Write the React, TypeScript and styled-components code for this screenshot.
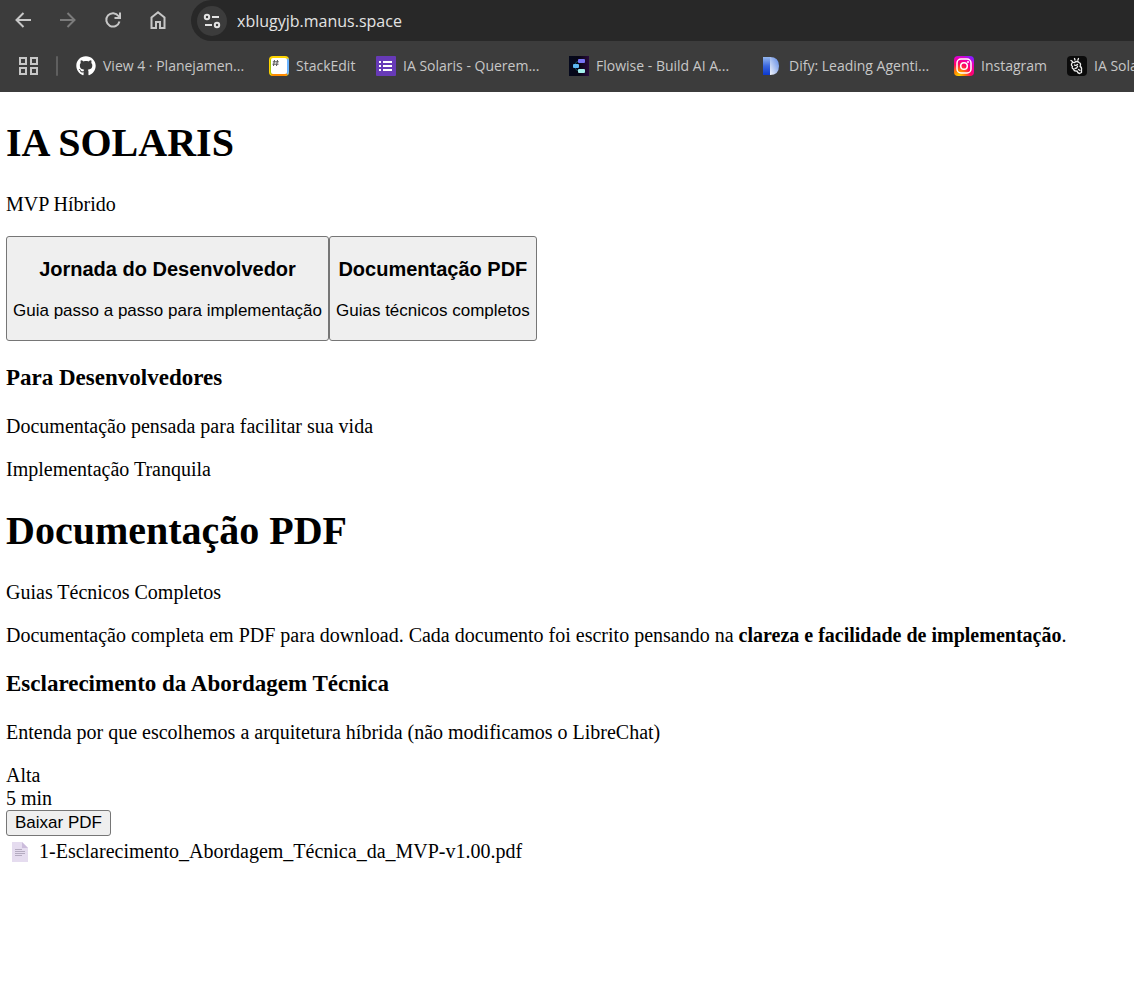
import React from "react";
import styled, { createGlobalStyle } from "styled-components";
import { FaGithub } from "react-icons/fa";

const GlobalStyle = createGlobalStyle`
  body {
    margin: 0;
    background: #fff;
    color: #000;
    font-family: "Liberation Serif", "Times New Roman", serif;
    font-size: 20px;
    line-height: 23px;
  }
`;

const Browser = styled.header`
  background: #3c3c3c;
  font-family: "Open Sans", "Segoe UI", sans-serif;
  overflow: hidden;
`;

const Toolbar = styled.nav`
  display: flex;
  height: 41px;
  padding-left: 11px;
`;

const NavButton = styled.button`
  display: flex;
  align-items: center;
  justify-content: center;
  width: 24px;
  height: 40px;
  margin-right: 21px;
  padding: 0;
  border: 0;
  background: none;
  color: #c7c7c7;

  &:disabled {
    color: #7b7b7b;
  }
`;

const AddressBar = styled.div`
  display: flex;
  flex: 1;
  align-items: center;
  height: 41px;
  padding-left: 6px;
  border-radius: 21px 0 0 21px;
  background: #282828;
`;

const SiteInfo = styled.button`
  display: flex;
  align-items: center;
  justify-content: center;
  width: 30px;
  height: 30px;
  padding: 0;
  border: 0;
  border-radius: 50%;
  background: #3c3c3c;
  color: #e3e3e3;
`;

const Address = styled.input`
  flex: 1;
  min-width: 0;
  margin-left: 10px;
  padding: 0;
  border: 0;
  outline: 0;
  background: none;
  color: #e3e3e3;
  font: 16px "Open Sans", "Segoe UI", sans-serif;
`;

const Bookmarks = styled.nav`
  display: flex;
  align-items: center;
  gap: 20px;
  height: 49px;
  padding: 0 0 2px 16px;
`;

const AppsGroup = styled.div`
  display: flex;
  align-items: center;
  gap: 16px;
  flex: none;
  width: 40px;
`;

const AppsButton = styled.button`
  display: flex;
  padding: 0;
  border: 0;
  background: none;
  color: #c7c7c7;
`;

const Separator = styled.span`
  flex: none;
  width: 2px;
  height: 20px;
  border-radius: 1px;
  background: #5f5f5f;
`;

const Bookmark = styled.a<{ $label: number }>`
  display: grid;
  grid-template-columns: 20px ${(p) => p.$label}px;
  gap: 7px;
  flex: none;
  align-items: center;
  color: #c7c7c7;
  font-size: 14px;
  line-height: 20px;
  text-decoration: none;
  white-space: nowrap;

  svg {
    display: block;
  }
`;

const Page = styled.main`
  padding: 28px 6px 24px;
`;

const Title = styled.h1`
  margin: 0 0 27px;
  font-size: 40px;
  line-height: 46px;
`;

const Text = styled.p`
  margin: 0 0 20px;
`;

const LeadText = styled(Text)`
  margin-bottom: 27px;
`;

const Subtitle = styled.h3`
  margin: 23px 0 24px;
  font-size: 23px;
  line-height: 27px;
`;

const Tabs = styled.nav`
  display: flex;
  margin-top: 20px;
`;

const Button = styled.button`
  padding: 2px 8px;
  border: 1px solid #767676;
  border-radius: 3px;
  background: #efefef;
  color: #000;
  font: 17px/20px "Liberation Sans", Arial, sans-serif;
`;

const TabButton = styled(Button)`
  padding: 2px 6px;

  h3 {
    margin: 19px 0 20px;
    font-size: 20px;
    line-height: 23px;
  }

  p {
    margin: 17px 0;
    line-height: 20px;
  }
`;

const FileRow = styled.div`
  display: flex;
  align-items: center;
  gap: 10px;
  margin-top: 4px;
  padding-left: 5px;
`;

const BackIcon = () => (
  <svg width="18" height="18" viewBox="0 0 18 18" fill="none" stroke="currentColor" strokeWidth="2">
    <path d="M17 9H3M9.5 2 2.5 9l7 7" />
  </svg>
);

const ForwardIcon = () => (
  <svg width="18" height="18" viewBox="0 0 18 18" fill="none" stroke="currentColor" strokeWidth="2">
    <path d="M1 9h14M8.500 2l7 7-7 7" />
  </svg>
);

const ReloadIcon = () => (
  <svg width="18" height="18" viewBox="0 0 18 18" fill="none" stroke="currentColor" strokeWidth="2">
    <path d="M15.500 10.500A6.700 6.700 0 1 1 14.500 5L16 6.500M16 1.500V7h-5.500" />
  </svg>
);

const HomeIcon = () => (
  <svg width="18" height="20" viewBox="0 0 18 20" fill="none" stroke="currentColor" strokeWidth="2">
    <path d="M2.500 7.500 9 2.200l6.500 5.300V18H11v-6H7v6H2.500Z" />
  </svg>
);

const TuneIcon = () => (
  <svg width="18" height="16" viewBox="0 0 18 16" fill="none" stroke="currentColor" strokeWidth="2">
    <circle cx="4" cy="4" r="2.200" />
    <path d="M9 4h7M2 12h7" />
    <circle cx="14" cy="12" r="2.200" />
  </svg>
);

const AppsIcon = () => (
  <svg width="24" height="20" viewBox="0 0 24 20" fill="none" stroke="currentColor" strokeWidth="2">
    <path d="M4 2h6v6H4zM15 2h6v6h-6zM4 12h6v6H4zM15 12h6v6h-6z" />
  </svg>
);

const StackEditIcon = () => (
  <svg width="20" height="20" viewBox="0 0 20 20">
    <rect width="20" height="20" rx="4" fill="#ffd500" />
    <path d="M1 3v13q0 2 2 3L10 10Z" fill="#a6c40a" />
    <path d="M2 19q1 1 3 1h10q3 0 4-2L10 10Z" fill="#ff8a00" />
    <path d="M19 2q1 1 1 3v10q0 2-1 4L10 10Z" fill="#6bb4ff" />
    <rect x="2" y="2" width="16" height="16" rx="2" fill="#fff" />
    <path d="M5.500 4 4.500 10M8.500 4l-1 6M3.800 5.800h6M3.500 8.200h6" stroke="#555" fill="none" />
  </svg>
);

const FormsIcon = () => (
  <svg width="20" height="20" viewBox="0 0 20 20">
    <rect width="20" height="20" rx="1" fill="#673ab7" />
    <path d="M3 5h2v2H3zM7 5h9v2H7zM3 9h2v2H3zM7 9h9v2H7zM3 13h2v2H3zM7 13h9v2H7z" fill="#fff" />
  </svg>
);

const FlowiseIcon = () => (
  <svg width="20" height="20" viewBox="0 0 20 20">
    <defs>
      <linearGradient id="flowise">
        <stop stopColor="#04081c" />
        <stop offset=".5" stopColor="#080716" />
        <stop offset="1" stopColor="#290a3c" />
      </linearGradient>
    </defs>
    <rect width="20" height="20" fill="url(#flowise)" />
    <path d="M6 10q0-5 5-5M6 10q0 5 5 5" stroke="#155567" fill="none" />
    <rect x="9" y="3" width="7" height="4" rx="1" fill="#7775f5" />
    <rect x="4" y="8" width="6" height="4" rx="1" fill="#5db7f0" />
    <rect x="9" y="13" width="7" height="4" rx="1" fill="#a5f0ed" />
  </svg>
);

const DifyIcon = () => (
  <svg width="20" height="20" viewBox="0 0 20 20">
    <defs>
      <linearGradient id="difyLeft" x2="0" y2="1">
        <stop stopColor="#94b7ee" />
        <stop offset=".5" stopColor="#3b68df" />
        <stop offset="1" stopColor="#0b38ce" />
      </linearGradient>
      <linearGradient id="difyRight" x1="1" y1="0" x2="0" y2="1">
        <stop stopColor="#5885e5" />
        <stop offset="1" stopColor="#f4f6fb" />
      </linearGradient>
    </defs>
    <path d="M1 1h8v18H1Z" fill="url(#difyLeft)" />
    <path d="M8 1q9 0 9 9t-9 9Z" fill="url(#difyRight)" />
  </svg>
);

const InstagramIcon = () => (
  <svg width="20" height="20" viewBox="0 0 20 20">
    <defs>
      <radialGradient id="insta" cx=".25" cy="1" r="1.100">
        <stop stopColor="#ffd600" />
        <stop offset=".25" stopColor="#ff8500" />
        <stop offset=".55" stopColor="#ff0164" />
        <stop offset=".85" stopColor="#e400c4" />
        <stop offset="1" stopColor="#8a1aff" />
      </radialGradient>
    </defs>
    <rect width="20" height="20" rx="4" fill="url(#insta)" />
    <g fill="none" stroke="#fff" strokeWidth="1.500">
      <rect x="3" y="3" width="14" height="14" rx="4" />
      <circle cx="10" cy="10" r="3.300" />
    </g>
    <circle cx="14" cy="6" r="1" fill="#fff" />
  </svg>
);

const ManusIcon = () => (
  <svg width="20" height="20" viewBox="0 0 20 20">
    <rect width="20" height="20" rx="4" fill="#0b0b0b" />
    <g fill="none" stroke="#eee" strokeWidth="1.300" strokeLinecap="round" strokeLinejoin="round">
      <path d="M7.500 2.500 8 4M11.500 2.500 10.800 4.200M4 4.500l1.500 1" />
      <path d="M4.500 8Q5 6 7.500 6.500 10 4.500 12 6.500q2.500 1 1 4 2 .5 1.500 3.500v2.500l-2 1q-2-.5-2.500-2.500-3 .5-3.500-2-2-.5-1-2.500Q4 9.500 4.500 8Z" />
      <path d="M7.500 9q1.500 1 3-.5m-2.500 4q2 0 2.500-2m1 3 1.500 1" />
    </g>
  </svg>
);

const DocumentIcon = () => (
  <svg width="18" height="20" viewBox="0 0 18 20" aria-hidden="true">
    <path d="M1 0h10l6 6v14H1Z" fill="#e5dcef" />
    <path d="M11 0v6h6Z" fill="#cbbcdb" />
    <path d="M4 7.500h7M4 9.500h10M4 11.500h10M4 13.500h7" stroke="#b4abc0" />
  </svg>
);

const bookmarks = [
  { label: "View 4 · Planejamen...", width: 146, icon: <FaGithub size={20} color="#fff" /> },
  { label: "StackEdit", width: 60, icon: <StackEditIcon /> },
  { label: "IA Solaris - Querem...", width: 146, icon: <FormsIcon /> },
  { label: "Flowise - Build AI A...", width: 146, icon: <FlowiseIcon /> },
  { label: "Dify: Leading Agenti...", width: 145, icon: <DifyIcon /> },
  { label: "Instagram", width: 66, icon: <InstagramIcon /> },
  { label: "IA Sola", width: 60, icon: <ManusIcon /> },
];

export default function App() {
  return (
    <>
      <GlobalStyle />
      <Browser>
        <Toolbar aria-label="Navegação">
          <NavButton aria-label="Voltar"><BackIcon /></NavButton>
          <NavButton aria-label="Avançar" disabled><ForwardIcon /></NavButton>
          <NavButton aria-label="Recarregar"><ReloadIcon /></NavButton>
          <NavButton aria-label="Página inicial"><HomeIcon /></NavButton>
          <AddressBar>
            <SiteInfo aria-label="Informações do site"><TuneIcon /></SiteInfo>
            <Address aria-label="Endereço" defaultValue="xblugyjb.manus.space" />
          </AddressBar>
        </Toolbar>
        <Bookmarks aria-label="Favoritos">
          <AppsGroup>
            <AppsButton aria-label="Aplicativos"><AppsIcon /></AppsButton>
            <Separator />
          </AppsGroup>
          {bookmarks.map((b) => (
            <Bookmark key={b.label} href="#" $label={b.width}>
              {b.icon}
              <span>{b.label}</span>
            </Bookmark>
          ))}
        </Bookmarks>
      </Browser>
      <Page>
        <Title>IA SOLARIS</Title>
        <Text>MVP Híbrido</Text>
        <Tabs>
          <TabButton>
            <h3>Jornada do Desenvolvedor</h3>
            <p>Guia passo a passo para implementação</p>
          </TabButton>
          <TabButton>
            <h3>Documentação PDF</h3>
            <p>Guias técnicos completos</p>
          </TabButton>
        </Tabs>
        <Subtitle>Para Desenvolvedores</Subtitle>
        <Text>Documentação pensada para facilitar sua vida</Text>
        <LeadText>Implementação Tranquila</LeadText>
        <Title>Documentação PDF</Title>
        <Text>Guias Técnicos Completos</Text>
        <Text>
          Documentação completa em PDF para download. Cada documento foi escrito pensando na{" "}
          <strong>clareza e facilidade de implementação</strong>.
        </Text>
        <Subtitle>Esclarecimento da Abordagem Técnica</Subtitle>
        <Text>Entenda por que escolhemos a arquitetura híbrida (não modificamos o LibreChat)</Text>
        <div>Alta</div>
        <div>5 min</div>
        <Button>Baixar PDF</Button>
        <FileRow>
          <DocumentIcon />
          <span>1-Esclarecimento_Abordagem_Técnica_da_MVP-v1.00.pdf</span>
        </FileRow>
      </Page>
    </>
  );
}
